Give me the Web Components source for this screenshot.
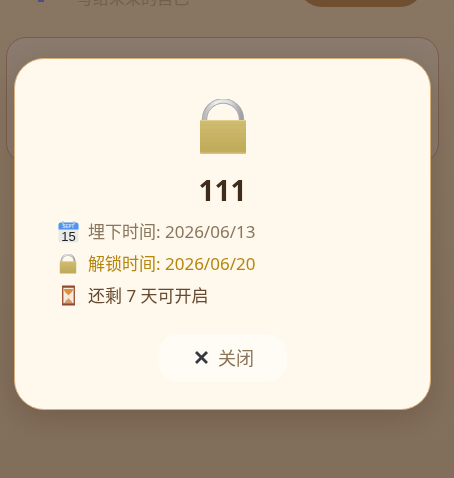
<!DOCTYPE html>
<html lang="zh">
<head>
<meta charset="utf-8">
<title>时光胶囊</title>
<style>
  html, body { margin: 0; height: 100%; overflow: hidden; background: #f7d6b2; }
  body { font-family: "Noto Sans", "Noto Sans CJK SC", sans-serif; }
</style>
</head>
<body>

<template id="page-tpl">
  <style>
    :host { display: block; height: 478px; overflow: hidden; background: linear-gradient(#f7d7b4, #ecc9a6); }
    .top { display: flex; height: 9px; overflow: hidden; padding-left: 38px; }
    .mark { width: 6px; height: 2px; background: #8790ff; flex: none; }
    .sub { margin-left: 33px; margin-top: -13px; font-size: 16px; line-height: 22px; color: #cfae8a; white-space: nowrap; }
    .go { width: 126px; height: 40px; margin: -33px 30px 0 auto; border-radius: 0 0 24px 24px; background: #ca9057; flex: none; }
    .card { height: 124px; margin: 28px 15px 0 6px; border: 1px solid #dfa78f; border-radius: 20px; background: #fbe0c8; }
  </style>
  <div class="top"><span class="mark"></span><span class="sub">写给未来的自己</span><span class="go"></span></div>
  <div class="card"></div>
</template>

<template id="dialog-tpl">
  <style>
    :host {
      position: fixed; inset: 0; display: block;
      background: rgba(0, 0, 0, .45);
    }
    .box {
      box-sizing: border-box; width: 417px; height: 352px; margin: 58px 0 0 14px;
      padding: 39.500px 0 0;
      background: #fff8ec; border: 1.500px solid #d8ae7c; border-radius: 30px;
      box-shadow: 0 8px 32px rgba(60, 35, 10, .25);
    }
    .hero { display: flex; justify-content: center; }
    h2 {
      margin: 17px 0 13px; text-align: center;
      font-size: 28px; line-height: 36px; font-weight: 700; color: #3e2c1c;
    }
    .rows { display: flex; flex-direction: column; gap: 10px; padding-left: 42px; }
    .actions { display: flex; justify-content: center; margin-top: 27px; }
  </style>
  <div class="box">
    <div class="hero"><slot name="hero"></slot></div>
    <h2><slot name="title"></slot></h2>
    <div class="rows"><slot></slot></div>
    <div class="actions"><slot name="action"></slot></div>
  </div>
</template>

<template id="row-tpl">
  <style>
    :host { display: flex; align-items: center; height: 22px; gap: 9px; font-size: 17px; line-height: 22px; color: #8a765d; white-space: nowrap; }
    :host([gold]) { color: #b5860f; }
    :host([strong]) { color: #66492e; }
    .ic { width: 22px; height: 22px; flex: none; display: flex; align-items: center; justify-content: center; }
  </style>
  <span class="ic"><slot name="icon"></slot></span>
  <span><slot></slot></span>
</template>

<template id="close-tpl">
  <style>
    :host { display: flex; align-items: center; justify-content: center; gap: 9px; box-sizing: border-box; width: 129px; height: 48px; padding-left: 3px; border-radius: 20px; background: #fffcf5; color: #8a7558; font-size: 18px; line-height: 24px; }
    svg { width: 15px; height: 15px; display: block; }
  </style>
  <svg viewBox="0 0 15 15"><path d="M2 2 13 13M13 2 2 13" stroke="#35383f" stroke-width="2.800" fill="none"/></svg>
  <span><slot></slot></span>
</template>

<script>
function shadowFrom(el, id) {
  const root = el.attachShadow({mode: 'open'});
  root.appendChild(document.getElementById(id).content.cloneNode(true));
  return root;
}

class CapsulePage extends HTMLElement {
  constructor() { super(); shadowFrom(this, 'page-tpl'); }
}
class CapsuleDialog extends HTMLElement {
  constructor() { super(); shadowFrom(this, 'dialog-tpl'); }
}
class InfoRow extends HTMLElement {
  constructor() { super(); shadowFrom(this, 'row-tpl'); }
}
class CloseButton extends HTMLElement {
  constructor() { super(); shadowFrom(this, 'close-tpl'); }
}

// padlock, same drawing for the big one and the row one
class LockIcon extends HTMLElement {
  constructor() {
    super();
    const root = this.attachShadow({mode: 'open'});
    root.innerHTML = `<style>:host{display:block;flex:none;width:var(--w,50px);height:var(--h,56px)}</style>
    <svg viewBox="0 0 50 56" width="100%" height="100%" style="display:block">
      <defs>
        <linearGradient id="b" x1="0" y1="0" x2="0" y2="1">
          <stop offset="0" stop-color="#d0bd72"/><stop offset=".5" stop-color="#c8b364"/><stop offset=".92" stop-color="#c0ab5a"/><stop offset="1" stop-color="#d6c88c"/>
        </linearGradient>
        <linearGradient id="sh" x1="0" y1="0" x2="1" y2="0">
          <stop offset="0" stop-color="#b9b9bb"/><stop offset=".3" stop-color="#eeeef0"/><stop offset=".7" stop-color="#dcdcde"/><stop offset="1" stop-color="#a0a0a3"/>
        </linearGradient>
      </defs>
      <path d="M6.500 22V20.500a18.500 18.500 0 0 1 37 0V22" fill="none" stroke="#a9a9ac" stroke-width="5.400"/>
      <path d="M6.500 22V20.500a18.500 18.500 0 0 1 37 0V22" fill="none" stroke="url(#sh)" stroke-width="3.600"/>
      <rect x="2" y="21" width="46" height="34" rx="1" fill="url(#b)"/>
      <path d="M2 26H48M2 31H48M2 35H48M2 39.500H48M2 44H48M2 49H48" stroke="#a8924a" stroke-width=".5" opacity=".2"/>
      <rect x="2" y="21" width="46" height="1" fill="#e0d18c"/>
    </svg>`;
  }
}

class CalendarIcon extends HTMLElement {
  constructor() {
    super();
    const root = this.attachShadow({mode: 'open'});
    root.innerHTML = `<style>:host{display:block;flex:none;width:21px;height:22px}</style>
    <svg viewBox="0 0 21 22" width="21" height="22" style="display:block">
      <rect x=".5" y="1.500" width="20" height="20" rx="2.500" fill="#e9e9e9"/>
      <path d="M.5 8.500V4A2.500 2.500 0 0 1 3 1.500H18A2.500 2.500 0 0 1 20.500 4V8.500Z" fill="#4f94ee"/>
      <path d="M5 0V3.500M16 0V3.500" stroke="#a9c8ef" stroke-width="1.500"/>
      <text x="10.500" y="7.400" text-anchor="middle" font-family="Liberation Sans" font-size="4.500" font-weight="700" fill="#d8e8fc">SEPT</text>
      <text x="10.500" y="20.300" text-anchor="middle" font-family="Liberation Sans" font-size="13" fill="#222">15</text>
    </svg>`;
  }
}

class HourglassIcon extends HTMLElement {
  constructor() {
    super();
    const root = this.attachShadow({mode: 'open'});
    root.innerHTML = `<style>:host{display:block;flex:none;width:15px;height:21px}</style>
    <svg viewBox="0 0 15 21" width="15" height="21" style="display:block">
      <rect x="2" y="2" width="11" height="17" fill="#f3ebe0"/>
      <path d="M3 4H12C12 7.500 8.500 8.500 7.500 10.500 6.500 8.500 3 7.500 3 4Z" fill="#dd8f3c"/>
      <path d="M7.500 13C6.500 15 4 15.500 3.500 18H11.500C11 15.500 8.500 15 7.500 13Z" fill="#d69a6a"/>
      <rect x="1" y=".5" width="13" height="2.300" rx=".6" fill="#8e4a35"/>
      <rect x="1" y="18.200" width="13" height="2.300" rx=".6" fill="#8e4a35"/>
      <rect x="1" y="2" width="1.400" height="17" fill="#a4553d"/>
      <rect x="12.600" y="2" width="1.400" height="17" fill="#a4553d"/>
    </svg>`;
  }
}

customElements.define('capsule-page', CapsulePage);
customElements.define('capsule-dialog', CapsuleDialog);
customElements.define('info-row', InfoRow);
customElements.define('close-button', CloseButton);
customElements.define('lock-icon', LockIcon);
customElements.define('calendar-icon', CalendarIcon);
customElements.define('hourglass-icon', HourglassIcon);
</script>

<capsule-page></capsule-page>
<capsule-dialog>
  <lock-icon slot="hero"></lock-icon>
  <span slot="title">111</span>
  <info-row><calendar-icon slot="icon"></calendar-icon>埋下时间: 2026/06/13</info-row>
  <info-row gold><lock-icon slot="icon" style="--w:18px;--h:20px"></lock-icon>解锁时间: 2026/06/20</info-row>
  <info-row strong><hourglass-icon slot="icon"></hourglass-icon>还剩 7 天可开启</info-row>
  <close-button slot="action">关闭</close-button>
</capsule-dialog>

</body>
</html>
